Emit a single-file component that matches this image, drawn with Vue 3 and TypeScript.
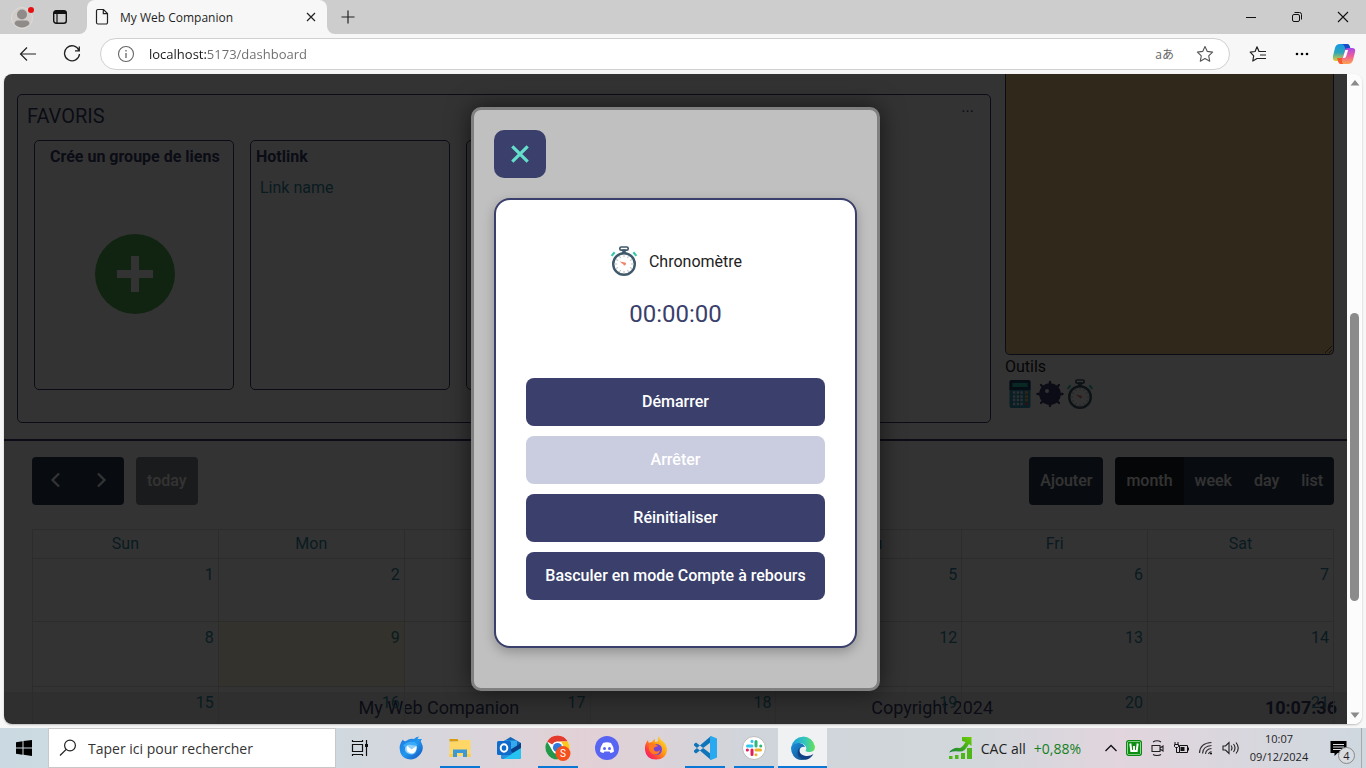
<script setup lang="ts">
import { ref, computed, onUnmounted } from 'vue'

interface CalendarDay {
  day: number
  today: boolean
}

const address = ref('localhost:5173/dashboard')
const search = ref('')
const note = ref('')
const modalOpen = ref(true)
const running = ref(false)
const countdown = ref(false)
const seconds = ref(0)
const view = ref('month')
let timer: number | undefined

const weekdays: string[] = ['Sun', 'Mon', 'Tue', 'Wed', 'Thu', 'Fri', 'Sat']
const views: string[] = ['month', 'week', 'day', 'list']
const weeks: CalendarDay[][] = [0, 1, 2].map((w) =>
  weekdays.map((_, d) => ({ day: w * 7 + d + 1, today: w * 7 + d + 1 === 9 })),
)
const ticks: number[] = Array.from({ length: 12 }, (_, i) => i * 30)

const display = computed(() => {
  const pad = (n: number): string => String(n).padStart(2, '0')
  const s = seconds.value
  return `${pad(Math.floor(s / 3600))}:${pad(Math.floor(s / 60) % 60)}:${pad(s % 60)}`
})

function start(): void {
  if (running.value) return
  running.value = true
  timer = window.setInterval(() => {
    seconds.value = Math.max(0, seconds.value + (countdown.value ? -1 : 1))
  }, 1000)
}
function stop(): void {
  running.value = false
  window.clearInterval(timer)
}
function reset(): void {
  stop()
  seconds.value = 0
}
onUnmounted(stop)
</script>

<template>
  <div class="desktop">
    <svg class="defs" aria-hidden="true">
      <defs>
        <symbol id="stopwatch" viewBox="0 0 30 30">
          <path d="M3.500 10.500 6.500 7l-1.700-1.400-3 3.600zM26.500 10.500 23.500 7l1.700-1.400 3 3.600z" fill="#35c9ae" />
          <rect x="10.800" y="1" width="8.400" height="3.200" rx="1.500" fill="none" stroke="#40596b" stroke-width="1.700" />
          <path d="M13.200 3.500h3.600v4h-3.600z" fill="#40596b" />
          <circle cx="15" cy="18" r="10.800" fill="#fff" stroke="#40596b" stroke-width="2.400" />
          <path v-for="t in ticks" :key="t" d="M15 9v2.200" stroke="#b9c1c6" stroke-width="1" :transform="`rotate(${t} 15 18)`" />
          <path d="m10.500 15.400 5.700 1.200a1.400 1.400 0 1 1-1.800 2z" fill="#f0836c" />
        </symbol>
        <linearGradient id="edgeA" x1="0" y1="0" x2="1" y2="0"><stop offset="0" stop-color="#1b9de2" /><stop offset=".6" stop-color="#35c9b8" /><stop offset="1" stop-color="#6be052" /></linearGradient>
        <linearGradient id="edgeB" x1="0" y1="0" x2="1" y2="1"><stop offset="0" stop-color="#1b91dc" /><stop offset="1" stop-color="#114a8b" /></linearGradient>
        <linearGradient id="foxA" x1="1" y1="0" x2="0" y2="1"><stop offset="0" stop-color="#fff14a" /><stop offset=".45" stop-color="#ff980e" /><stop offset=".75" stop-color="#ff3647" /><stop offset="1" stop-color="#e31587" /></linearGradient>
        <linearGradient id="copA" x1="0" y1="0" x2="0" y2="1"><stop offset="0" stop-color="#1599e8" /><stop offset=".5" stop-color="#2ca6b8" /><stop offset="1" stop-color="#e5cd31" /></linearGradient>
        <linearGradient id="copB" x1="0" y1="0" x2="0" y2="1"><stop offset="0" stop-color="#a948e8" /><stop offset=".5" stop-color="#ed5c9a" /><stop offset="1" stop-color="#ffa34d" /></linearGradient>
        <linearGradient id="birdA" x1="0" y1="0" x2="1" y2="1"><stop offset="0" stop-color="#1b75dd" /><stop offset=".5" stop-color="#2296ee" /><stop offset="1" stop-color="#1451bc" /></linearGradient>
        <linearGradient id="stockA" x1="0" y1="1" x2="1" y2="0"><stop offset="0" stop-color="#16803c" /><stop offset="1" stop-color="#6ccf00" /></linearGradient>
      </defs>
    </svg>

    <header class="tabstrip">
      <div class="tab-left">
        <button class="bare avatar" aria-label="Profil">
          <svg width="24" height="24" viewBox="0 0 24 24"><circle cx="11" cy="13" r="10.500" fill="#d0cdca" stroke="#dedbd6" /><circle cx="11" cy="9.500" r="5" fill="#8f8b88" /><path d="M3.500 19q.5-3.500 3-3.500h9q2.500 0 3 3.500a10 10 0 0 1-15 0z" fill="#8f8b88" /><circle cx="20" cy="5" r="3" fill="#e60f12" /></svg>
        </button>
        <button class="bare" aria-label="Espaces de travail">
          <svg width="16" height="16" viewBox="0 0 16 16"><rect x="1.700" y="1.700" width="12.600" height="12.600" rx="2.500" fill="none" stroke="#111" stroke-width="1.400" /><path d="M1.500 5V4a2.500 2.500 0 0 1 2.500-2.500h8A2.500 2.500 0 0 1 14.500 4v1z" fill="#111" /><path d="M5 5v9" stroke="#111" stroke-width="1.200" /></svg>
        </button>
      </div>
      <div class="tab-gap">
        <div class="tab">
          <svg width="14" height="18" viewBox="0 0 14 18"><path d="M3 1.500h5.500l4 4V14.500a1.500 1.500 0 0 1-1.500 1.500H3a1.500 1.500 0 0 1-1.500-1.500V3A1.500 1.500 0 0 1 3 1.500zM8.300 1.500V5.700h4.200" fill="none" stroke="#222" stroke-width="1.200" /></svg>
          <span class="tab-title">My Web Companion</span>
          <button class="bare" aria-label="Fermer l'onglet"><svg width="10" height="10" viewBox="0 0 10 10"><path d="m1 1 8 8M9 1 1 9" stroke="#222" stroke-width="1.200" /></svg></button>
        </div>
      </div>
      <div class="tab-right">
        <button class="bare" aria-label="Nouvel onglet"><svg width="14" height="14" viewBox="0 0 14 14"><path d="M7 .5v13M.5 7h13" stroke="#222" stroke-width="1.200" /></svg></button>
        <div class="window-buttons">
          <button class="bare" aria-label="Réduire"><svg width="12" height="12" viewBox="0 0 12 12"><path d="M1 6.500h10" stroke="#111" /></svg></button>
          <button class="bare" aria-label="Restaurer"><svg width="12" height="12" viewBox="0 0 12 12"><rect x="1.500" y="3.500" width="7" height="7" rx="1.500" fill="none" stroke="#111" /><path d="M3.500 1.500H8.500A2 2 0 0 1 10.500 3.500V8.500" fill="none" stroke="#111" /></svg></button>
          <button class="bare" aria-label="Fermer"><svg width="12" height="12" viewBox="0 0 12 12"><path d="m1 1 10 10M11 1 1 11" stroke="#111" stroke-width="1.100" /></svg></button>
        </div>
      </div>
    </header>

    <nav class="toolbar">
      <button class="bare tool" aria-label="Précédent"><svg width="18" height="16" viewBox="0 0 18 16"><path d="M17 8H1.500M8 1.500 1.500 8 8 14.500" fill="none" stroke="#222" stroke-width="1.200" /></svg></button>
      <button class="bare tool" aria-label="Actualiser"><svg width="18" height="18" viewBox="0 0 18 18"><path d="M16 5.500A7.500 7.500 0 1 0 16.500 9M16.300 1.500v4.300H12" fill="none" stroke="#222" stroke-width="1.300" /></svg></button>
      <div class="address">
        <svg width="18" height="18" viewBox="0 0 18 18"><circle cx="9" cy="9" r="7.500" fill="none" stroke="#666" stroke-width="1.100" /><path d="M9 8v5M9 5v1.500" stroke="#666" stroke-width="1.300" /></svg>
        <input v-model="address" class="address-input" type="text" aria-label="Adresse" />
        <button class="bare translate" aria-label="Traduire">aあ</button>
        <button class="bare" aria-label="Ajouter aux favoris"><svg width="18" height="18" viewBox="0 0 18 18"><path d="m9 1.500 2.300 4.900 5.300.7-3.900 3.700 1 5.400L9 13.600l-4.700 2.600 1-5.400L1.400 7.100l5.300-.7z" fill="none" stroke="#555" stroke-width="1.100" stroke-linejoin="round" /></svg></button>
      </div>
      <div class="toolbar-end">
        <button class="bare" aria-label="Favoris"><svg width="18" height="18" viewBox="0 0 18 18"><path d="M10 13.500 8 13.500l-4.200 2.500.9-5.200L1.200 7.200l4.900-.7L8 1.800l2 4.700h7M11 10h6M10 13.500h7" fill="none" stroke="#222" stroke-width="1.200" stroke-linejoin="round" /></svg></button>
        <button class="bare dots" aria-label="Paramètres"><svg width="16" height="4" viewBox="0 0 16 4"><circle cx="3" cy="2" r="1.300" /><circle cx="8" cy="2" r="1.300" /><circle cx="13" cy="2" r="1.300" /></svg></button>
        <button class="bare" aria-label="Copilot"><svg width="24" height="22" viewBox="0 0 24 22"><path d="M8 1h7q2 0 2.600 2L19 7h-3.500q-2 0-2.600 2l-2 6.500Q10.200 18 8 18H4q-4 0-3-5L3 5q1-4 5-4z" fill="url(#copA)" /><path d="M11 1h4q2 0 2.600 2L19 7h-4q-2-1-2.500-3.500T9 1z" fill="#1c49c6" /><path d="M16 21H9q-2 0-2.600-2L5 15h3.500q2 0 2.600-2l2-6.500Q13.800 5 16 5h4q4 0 3 4l-2 8q-1 4-5 4z" fill="url(#copB)" /><path d="m13.300 7-2.500 8h1.600q1.300 0 1.900-2l1.800-6z" fill="#fff" /><path d="M5 15h5q-.5 4 1 6H9q-2 0-2.600-2z" fill="#f35a2e" /></svg></button>
      </div>
    </nav>

    <div class="viewport">
      <main class="page">
        <div class="top">
          <section class="favorites">
            <div class="fav-head">
              <h2>FAVORIS</h2>
              <button class="bare more" aria-label="Options">...</button>
            </div>
            <div class="cards">
              <article class="card create">
                <h3>Crée un groupe de liens</h3>
                <button class="bare plus" aria-label="Ajouter un groupe"><svg width="80" height="80" viewBox="0 0 80 80"><circle cx="40" cy="40" r="40" fill="#55b155" /><path d="M22 40h36M40 22v36" stroke="#fff" stroke-width="8" /></svg></button>
              </article>
              <article class="card">
                <h3>Hotlink</h3>
                <a href="#">Link name</a>
              </article>
              <article class="card"></article>
            </div>
          </section>
          <aside class="tools">
            <textarea v-model="note" aria-label="Notes"></textarea>
            <h4>Outils</h4>
            <div class="tool-icons">
              <button class="bare" aria-label="Calculatrice"><svg width="30" height="30" viewBox="0 0 30 30"><rect x="4.500" y="1" width="21" height="28" rx="2" fill="#2e96b8" /><path d="M4.500 11V3a2 2 0 0 1 2-2h17a2 2 0 0 1 2 2v8z" fill="#27446b" /><rect x="7.500" y="4" width="15" height="4" fill="#35c9ae" /><path d="M8 13.500h10M8 17.500h10M8 21h10M8 25h10" stroke="#e8edf0" stroke-width="2.300" stroke-dasharray="2.300 1.400" /><path d="M20 13.500h3M20 17.500h3M20 21h3" stroke="#f5b65e" stroke-width="2.300" /><path d="M20 25h3" stroke="#e45450" stroke-width="2.300" /></svg></button>
              <button class="bare" aria-label="Démineur"><svg width="30" height="30" viewBox="0 0 30 30"><path d="M15 3v24M2.500 15h25M6 6l18 18M24 6 6 24" stroke="#3a3f6b" stroke-width="2.400" stroke-linecap="round" /><circle cx="15" cy="15" r="10.800" fill="#3a3f6b" /><circle cx="12" cy="12" r="2" fill="#f4f4ff" /></svg></button>
              <button class="bare" aria-label="Chronomètre" @click="modalOpen = true"><svg width="30" height="30"><use href="#stopwatch" /></svg></button>
            </div>
          </aside>
        </div>

        <section class="calendar">
          <div class="cal-bar">
            <div class="cal-group">
              <div class="segment">
                <button aria-label="Mois précédent"><svg width="24" height="24" viewBox="0 0 24 24"><path d="m16 5.500-6.500 6.500L16 18.500" fill="none" stroke="#fff" stroke-width="2.200" /></svg></button>
                <button aria-label="Mois suivant"><svg width="24" height="24" viewBox="0 0 24 24"><path d="m9 5.500 6.500 6.500L9 18.500" fill="none" stroke="#fff" stroke-width="2.200" /></svg></button>
              </div>
              <div class="segment"><button disabled>today</button></div>
            </div>
            <div class="cal-group">
              <div class="segment"><button>Ajouter</button></div>
              <div class="segment">
                <button v-for="v in views" :key="v" :class="{ active: v === view }" @click="view = v">{{ v }}</button>
              </div>
            </div>
          </div>
          <table class="grid">
            <thead>
              <tr><th v-for="d in weekdays" :key="d" scope="col">{{ d }}</th></tr>
            </thead>
            <tbody>
              <tr v-for="(week, i) in weeks" :key="i">
                <td v-for="cell in week" :key="cell.day" :class="{ today: cell.today }">{{ cell.day }}</td>
              </tr>
            </tbody>
          </table>
        </section>

        <footer class="foot">
          <span class="foot-name">My Web Companion</span>
          <span>Copyright 2024</span>
          <strong>10:07:36</strong>
        </footer>

        <div v-if="modalOpen" class="overlay">
          <div class="modal" role="dialog" aria-label="Chronomètre">
            <button class="close" aria-label="Fermer" @click="modalOpen = false"><svg width="20" height="20" viewBox="0 0 20 20"><path d="m2.300 2.300 15.400 15.400M17.700 2.300 2.300 17.700" stroke="#64dfcb" stroke-width="3.200" /></svg></button>
            <div class="panel">
              <div class="panel-title">
                <svg width="30" height="30"><use href="#stopwatch" /></svg>
                <span>Chronomètre</span>
              </div>
              <div class="time">{{ display }}</div>
              <div class="actions">
                <button :disabled="running" @click="start">Démarrer</button>
                <button :disabled="!running" @click="stop">Arrêter</button>
                <button @click="reset">Réinitialiser</button>
                <button @click="countdown = !countdown">Basculer en mode {{ countdown ? 'Chronomètre' : 'Compte à rebours' }}</button>
              </div>
            </div>
          </div>
        </div>
      </main>
      <div class="scrollbar" aria-hidden="true">
        <svg width="10" height="6" viewBox="0 0 10 6"><path d="M5 0 9.500 5.500H.5z" fill="#8a8a8a" /></svg>
        <div class="track-before"></div>
        <div class="thumb"></div>
        <div class="track-after"></div>
        <svg width="10" height="6" viewBox="0 0 10 6"><path d="M5 6 9.500.5H.5z" fill="#8a8a8a" /></svg>
      </div>
    </div>

    <div class="taskbar">
      <button class="bare start" aria-label="Démarrer Windows"><svg width="16" height="16" viewBox="0 0 16 16"><path d="M0 2.200 6.500 1.300V7.500H0zM7.500 1.100 16 0v7.500H7.500zM0 8.500h6.500v6.200L0 13.800zM7.500 8.500H16V16l-8.500-1.200z" /></svg></button>
      <div class="search">
        <svg width="18" height="18" viewBox="0 0 18 18"><circle cx="11" cy="6.500" r="5.400" fill="none" stroke="#222" stroke-width="1.200" /><path d="m7.200 10.400-6.200 6.100" stroke="#222" stroke-width="1.300" /></svg>
        <input v-model="search" type="text" aria-label="Rechercher" placeholder="Taper ici pour rechercher" />
      </div>
      <button class="bare taskview" aria-label="Affichage des tâches"><svg width="18" height="16" viewBox="0 0 18 16"><path d="M1.500 4.500h10v7h-10zM1.500 0v1.500h10V0M1.500 16v-1.500h10V16M15.500 0v16" fill="none" stroke="#111" stroke-width="1.200" /><path d="M14 4h3v3h-3z" fill="#111" /></svg></button>
      <div class="apps">
        <button class="bare app" aria-label="Thunderbird"><svg width="24" height="24" viewBox="0 0 24 24"><path d="M4 3.500Q4.500 6 7 5 11 2 15 3q2-2.500 5-2.500L18.500 3 23 3q-2 2-.5 4 3 6-1 11T12 23.500Q4 23 1.500 17-1 9 4 3.500z" fill="url(#birdA)" /><path d="M7 8.500q-2.500 6 1 8.500 4 2.500 7.500.5 3-3 2-8L12 8z" fill="#8fd0fb" /><path d="m8 9.500 4.500 4L17.500 10q.5 5-3 7-3.500 1-6-1.500-1.500-2.500-.5-6z" fill="#fff" /><path d="M4 9.500Q8.500 4.500 15.500 6l3.500 3-4 .5-5.500-1L6 11z" fill="#38aafa" /></svg></button>
        <button class="bare app open" aria-label="Explorateur"><svg width="24" height="24" viewBox="0 0 24 24"><path d="M1.500 3h8l1.500 2.500H1.500z" fill="#d99c0b" /><path d="M1.500 6 10 5.500 11 4h11.500v16h-21z" fill="#ffd766" /><path d="M5 21v-7.500h14V21h-4v-4H9v4z" fill="#3a97d8" /><path d="M1.500 18H5v3H1.500zM19 18h3.500v3H19z" fill="#ffcb45" /></svg></button>
        <button class="bare app" aria-label="Outlook"><svg width="26" height="24" viewBox="0 0 26 24"><path d="m5 7 9.500-6L25 7v14q0 2-2 2H7q-2 0-2-2z" fill="#1267b8" /><path d="M8 4.500h13V15H8z" fill="#34a9ee" /><path d="m14 14 11-7v6l-7 5z" fill="#0a3f86" /><path d="m25 12-9 5.500-9 5.500h16q2 0 2-2z" fill="#25c2f2" /><path d="m5 13 11 5-9 5q-2 0-2-2z" fill="#2493df" /><rect x="1" y="5" width="14" height="14" rx="1.500" fill="#0f6ccb" /><ellipse cx="8" cy="12" rx="3.300" ry="3.700" fill="none" stroke="#fff" stroke-width="2" /></svg></button>
        <button class="bare app open" aria-label="Chrome"><svg width="26" height="26" viewBox="0 0 26 26"><circle cx="12.500" cy="12.500" r="12" fill="#fff" /><path d="M2.100 6.500a12 12 0 0 1 20.800 0H12.500a6 6 0 0 0-5.200 3z" fill="#e33b2e" /><path d="M22.900 6.500a12 12 0 0 1-10.400 18l5.200-9a6 6 0 0 0 0-6l-1.700-3z" fill="#fcc71f" /><path d="M2.100 6.500a12 12 0 0 0 10.400 18l3.400-6.200a6 6 0 0 1-8.600-2.800z" fill="#24984a" /><circle cx="12.500" cy="12.500" r="5.800" fill="#fff" /><circle cx="12.500" cy="12.500" r="4.600" fill="#3279dd" /><circle cx="18" cy="18.500" r="7.500" fill="#f4511e" /><text x="18" y="22" text-anchor="middle" fill="#fff" font-family="Roboto, sans-serif" font-size="10">S</text></svg></button>
        <button class="bare app" aria-label="Discord"><svg width="24" height="24" viewBox="0 0 24 24"><circle cx="12" cy="12" r="12" fill="#5865f2" /><path d="M8 7q4-1.500 8 0 3 4 3 8.500-1.500 1.200-3.500 1.500l-1-1.500h-5L8.500 17Q6.500 16.700 5 15.500 5 11 8 7z" fill="#fff" /><circle cx="9.500" cy="12.500" r="1.500" fill="#5865f2" /><circle cx="14.500" cy="12.500" r="1.500" fill="#5865f2" /></svg></button>
        <button class="bare app" aria-label="Firefox"><svg width="24" height="24" viewBox="0 0 24 24"><path d="M14.500 0q1 3 4 5 5 4 4.500 9.500-1 9-11 9T1 14Q.5 8 4 4q0 2 1 3 1.500-1 3-1Q9.500 3.500 11 3v3q3 0 3-2 0-2 .5-4z" fill="url(#foxA)" /><circle cx="12.500" cy="13.500" r="5.500" fill="#7545d5" /><path d="M5 9q3-3 6-1l3 2q-2 1-3 1-2 1-1 3 2 3 6 0-1 5-6 4.500Q4 17 5 9z" fill="#ff7a20" /></svg></button>
        <button class="bare app open" aria-label="Visual Studio Code"><svg width="24" height="24" viewBox="0 0 24 24"><path d="m1 8 2-1.500L18 18v6L1 9.500zM1 16l2 1.500L18 6V0L1 14.500z" fill="#0f75bb" /><path d="m18 0 6 2.500v19L18 24l-1-1.500v-21z" fill="#29a9f0" /></svg></button>
        <button class="bare app open" aria-label="Slack"><svg width="24" height="24" viewBox="0 0 24 24"><circle cx="12" cy="12" r="11.500" fill="#fff" stroke="#bbb" /><g fill="none" stroke-width="3" stroke-linecap="round"><path d="M10 5.300v.1M10 10H5.500" stroke="#36c5f0" /><path d="M14 5.500V10M18.700 10h.1" stroke="#2eb67d" /><path d="M14 14h4.500M14 18.700v.1" stroke="#ecb22e" /><path d="M10 14v4.500M5.300 14h.1" stroke="#e01e5a" /></g></svg></button>
        <button class="bare app current" aria-label="Edge"><svg width="24" height="24" viewBox="0 0 24 24"><path d="M.3 11A12 12 0 0 1 24 10.500q0 5-5 5.500-3 .3-4.500-1 1.500-1.500.5-4Q13 7 8 7 2 7.500.3 11z" fill="url(#edgeA)" /><path d="M.2 11Q2 6.500 8.500 7q4 .5 5.500 4-4-1-5.500 3-1 7 7 9-8 3-13-3Q-.5 16 .2 11z" fill="url(#edgeB)" /><path d="M8.500 12q-1 6 4.500 7.500 5 1.500 9.500-1.500-3 5-8 5.800Q6 22 6.500 16q.3-2.500 2-4z" fill="#113f83" /></svg></button>
      </div>
      <div class="tray">
        <svg width="24" height="24" viewBox="0 0 24 24"><path d="M0 23v-3h3.500v3zM6 23v-4h3.500v4zM12 23v-6h4v6zM18 23V12h5v11z" fill="#4fb61a" /><path d="M0 16.500Q4.500 11 10 12q3 .3 6.500-6L13 5V1h9.500v9L20 8q-4.500 8.500-10 7.500-5-1-10 1z" fill="url(#stockA)" /></svg>
        <span class="stock">CAC all</span>
        <span class="stock gain">+0,88%</span>
        <button class="bare chevron" aria-label="Icônes cachées"><svg width="14" height="8" viewBox="0 0 14 8"><path d="m1.500 7 5.500-5.500L12.500 7" fill="none" stroke="#111" stroke-width="1.300" /></svg></button>
        <button class="bare" aria-label="Application W"><svg width="16" height="16" viewBox="0 0 16 16"><rect x=".7" y=".7" width="14.600" height="14.600" rx="2" fill="#fff" stroke="#078b0c" stroke-width="1.400" /><path d="M2 2h12v12H2z" fill="#0c8f12" /><path d="M4.300 3.500l1 7.500h5.400l1-7.500M8 6v5" fill="none" stroke="#fff" stroke-width="2" /></svg></button>
        <button class="bare" aria-label="Caméra"><svg width="16" height="16" viewBox="0 0 16 16"><path d="M2 5.500h8v6H2zM10 8l3-2v5l-3-2M3 2q4-2.500 8 0M3 14.500q4 2 8 0" fill="none" stroke="#222" stroke-width="1.100" /></svg></button>
        <button class="bare" aria-label="Batterie"><svg width="16" height="16" viewBox="0 0 16 16"><path d="M5.500 5.500h8v7h-8zM14.500 7.500v3M1 2v2M4 2v2M.5 4.500h4v2l-1 1h-2l-1-1zM2.500 8v4.500h3" fill="none" stroke="#111" /><path d="M6.500 7h4v4h-4z" fill="#111" /></svg></button>
        <button class="bare" aria-label="Réseau"><svg width="16" height="16" viewBox="0 0 16 16"><path d="M1.500 13Q2 3 13.500 2.500M4.500 13.500Q5 6 13.500 5.500M7.500 14Q8 9 13.500 8.500M10.500 14q.5-2 3-2.500" fill="none" stroke="#333" stroke-width="1.200" /><circle cx="13" cy="13.500" r="1" /></svg></button>
        <button class="bare" aria-label="Volume"><svg width="18" height="16" viewBox="0 0 18 16"><path d="M1 6h2.500L7 2.500v11L3.500 10H1zM9 5.500q2 2.500 0 5M11.500 4q3 4 0 8M14 2.500q4.500 5.500 0 11" fill="none" stroke="#222" stroke-width="1.100" /></svg></button>
        <div class="clock"><span>10:07</span><span>09/12/2024</span></div>
        <button class="bare notif" aria-label="Notifications">
          <svg width="17" height="17" viewBox="0 0 17 17"><path d="M.5 1h16v12h-9L4.500 16v-3h-4z" /><path d="M3 4.500h11M3 7h11M3 9.500h8" stroke="#dfe0e3" /></svg>
          <span class="badge">4</span>
        </button>
        <div class="peek"></div>
      </div>
    </div>
  </div>
</template>

<style>
body {
  margin: 0;
}
</style>

<style scoped>
.desktop {
  --navy: #3a3f6b;
  --link: #30899f;
  display: flex;
  flex-direction: column;
  height: 100vh;
  overflow: hidden;
  background: #f7f7f7;
  color: #1f1f1f;
  font-family: "Open Sans", "Noto Sans", "Noto Sans CJK JP", sans-serif;
  font-size: 12px;
}
.desktop * {
  box-sizing: border-box;
}
.defs {
  position: absolute;
  width: 0;
  height: 0;
}
svg {
  display: block;
  flex: none;
}
button,
input,
textarea {
  font: inherit;
  color: inherit;
}
.bare {
  display: flex;
  align-items: center;
  justify-content: center;
  padding: 0;
  border: 0;
  background: none;
}

/* Tab strip */
.tabstrip {
  display: flex;
  flex: none;
  height: 34px;
}
.tab-left,
.tab-right {
  display: flex;
  align-items: center;
  background: #cdcdcd;
}
.tab-left {
  width: 87px;
  padding-left: 11px;
  gap: 17px;
  border-bottom-right-radius: 8px;
}
.tab-gap {
  background: linear-gradient(#cdcdcd 50%, #f7f7f7 50%);
}
.tab {
  display: flex;
  align-items: center;
  width: 240px;
  height: 34px;
  padding: 0 11px 0 8px;
  border-radius: 8px 8px 0 0;
  background: #f7f7f7;
}
.tab-title {
  flex: 1;
  padding-left: 11px;
}
.tab-right {
  flex: 1;
  justify-content: space-between;
  padding-left: 14px;
  border-bottom-left-radius: 8px;
}
.window-buttons {
  display: flex;
}
.window-buttons .bare {
  width: 46px;
  height: 34px;
}

/* Address bar */
.toolbar {
  display: flex;
  flex: none;
  align-items: center;
  height: 40px;
  padding-left: 6px;
}
.tool {
  width: 44px;
  height: 32px;
}
.address {
  display: flex;
  flex: 1;
  align-items: center;
  height: 32px;
  margin-left: 6px;
  padding: 0 15px 0 16px;
  border: 1px solid #d0d0d0;
  border-radius: 16px;
  background: #fff;
}
.address-input {
  flex: 1;
  min-width: 0;
  margin: 0 14px;
  padding: 0;
  border: 0;
  outline: 0;
  background: linear-gradient(90deg, #1a1a1a 58px, #6c6c6c 58px);
  background-clip: text;
  -webkit-text-fill-color: transparent;
  font-size: 13px;
}
.translate {
  margin-right: 22px;
  color: #666;
  font-size: 12px;
}
.toolbar-end {
  display: flex;
  align-items: center;
  justify-content: space-between;
  width: 136px;
  padding: 0 10px 0 19px;
}
.dots {
  padding-left: 4px;
}

/* Browser viewport */
.viewport {
  display: flex;
  flex: 1;
  min-height: 0;
  margin: 0 4px 4px;
  border-radius: 8px;
  overflow: hidden;
  box-shadow: 0 1px 2px #bbb;
}
.page {
  position: relative;
  flex: 1;
  overflow: hidden;
  background: #fff;
  color: var(--navy);
  font-family: Roboto, sans-serif;
  font-size: 16px;
}
.top {
  display: grid;
  grid-template-columns: 974fr 329fr;
  gap: 14px;
  padding: 0 13px 16px;
  border-bottom: 2px solid var(--navy);
}
.favorites {
  margin-top: 20px;
  padding: 8px 9px 32px;
  border: 1px solid var(--navy);
  border-radius: 5px;
}
.fav-head {
  display: flex;
  justify-content: space-between;
  height: 37px;
}
h2 {
  margin: 0;
  font-size: 20px;
  font-weight: 400;
  line-height: 26px;
}
.more {
  align-self: flex-start;
  margin-right: 7px;
  line-height: 8px;
}
.cards {
  display: flex;
  gap: 16px;
  padding-left: 7px;
}
.card {
  display: flex;
  flex-direction: column;
  width: 200px;
  height: 250px;
  padding: 4px 5px;
  border: 1px solid var(--navy);
  border-radius: 5px;
}
h3 {
  margin: 0;
  font-size: 16px;
  font-weight: 700;
  line-height: 24px;
}
.create h3 {
  padding-left: 10px;
  white-space: nowrap;
}
.plus {
  margin: auto;
  padding-bottom: 6px;
  padding-left: 2px;
}
.card a {
  margin-top: 6px;
  padding-left: 4px;
  color: var(--link);
  line-height: 26px;
  text-decoration: none;
}
.tools {
  display: flex;
  flex-direction: column;
}
textarea {
  height: 281px;
  border: 1px solid var(--navy);
  border-top: 0;
  border-radius: 0 0 5px 5px;
  background: #f0c887;
}
h4 {
  margin: 0;
  color: #222;
  font-size: 16px;
  font-weight: 400;
  line-height: 24px;
}
.tool-icons {
  display: flex;
}

/* Calendar */
.calendar {
  padding: 16px 13px 0 28px;
}
.cal-bar,
.cal-group {
  display: flex;
  justify-content: space-between;
  gap: 12px;
}
.segment {
  display: flex;
  border-radius: 4px;
  overflow: hidden;
}
.segment button {
  height: 48px;
  padding: 0 11px 2px;
  border: 0;
  background: #2c3e50;
  color: #fff;
  font-weight: 500;
}
.segment button:disabled {
  background: #82868a;
}
.segment .active {
  background: #1a1f25;
}
.grid {
  position: relative;
  z-index: 2;
  width: 100%;
  margin-top: 24px;
  border-collapse: collapse;
  table-layout: fixed;
  color: var(--link);
}
th,
td {
  border: 1px solid #ddd;
}
th {
  height: 29px;
  padding: 0 0 2px;
  font-weight: 400;
}
td {
  height: 65px;
  padding: 4px 4px 0;
  line-height: 24px;
  text-align: right;
  vertical-align: top;
}
tbody tr:first-child td {
  height: 63px;
}
.today {
  background: rgba(255, 220, 40, 0.15);
}
.foot {
  position: absolute;
  z-index: 1;
  right: 0;
  bottom: 0;
  left: 0;
  display: grid;
  grid-template-columns: 513fr 394fr auto;
  align-items: center;
  height: 32px;
  padding-right: 10px;
  padding-bottom: 2px;
  padding-left: 26.400%;
  background: #ebebeb;
  font-size: 18px;
}

/* Stopwatch dialog */
.overlay {
  position: absolute;
  z-index: 3;
  inset: 0;
  display: flex;
  align-items: center;
  justify-content: center;
  background: rgba(0, 0, 0, 0.8);
}
.modal {
  padding: 20px 20px 40px;
  border: 3px solid #808080;
  border-radius: 10px;
  background: #c0c0c0;
  box-shadow: 0 0 24px rgba(0, 0, 0, 0.6);
}
.close {
  display: flex;
  align-items: center;
  justify-content: center;
  width: 52px;
  height: 48px;
  padding: 0;
  border: 0;
  border-radius: 10px;
  background: var(--navy);
}
.panel {
  display: flex;
  flex-direction: column;
  align-items: center;
  margin-top: 20px;
  padding: 46px 30px;
  border: 2px solid var(--navy);
  border-radius: 16px;
  background: #fff;
  box-shadow: 0 4px 12px rgba(0, 0, 0, 0.25);
}
.panel-title {
  display: flex;
  align-items: center;
  gap: 10px;
  height: 30px;
  color: #222;
}
.time {
  margin: 20px 0 46px;
  font-size: 24px;
  line-height: 36px;
}
.actions {
  display: flex;
  flex-direction: column;
  gap: 10px;
}
.actions button {
  height: 48px;
  padding: 0 19px 2px;
  border: 0;
  border-radius: 8px;
  background: var(--navy);
  color: #fff;
  font-weight: 500;
  white-space: nowrap;
}
.actions button:disabled {
  background: #cacce0;
}

/* Scroll bar */
.scrollbar {
  display: flex;
  flex-direction: column;
  align-items: center;
  width: 15px;
  padding: 6px 0;
  background: #fcfcfc;
}
.track-before {
  flex: 227;
}
.thumb {
  flex: 288;
  width: 9px;
  border-radius: 5px;
  background: #8b8b8b;
}
.track-after {
  flex: 111;
}

/* Windows task bar */
.taskbar {
  display: flex;
  flex: none;
  align-items: stretch;
  height: 40px;
  background: linear-gradient(90deg, #cbdae2, #d0d9df 25%, #e2d1d6 43%, #d0d5db 55%, #d2d7dc 72%, #e2d5dd 82%, #cfd8df);
}
.start {
  width: 48px;
}
.search {
  display: flex;
  align-items: center;
  width: 288px;
  padding-left: 10px;
  gap: 11px;
  border: 1px solid #c8c8c8;
  background: #fff;
}
.search input {
  flex: 1;
  min-width: 0;
  padding: 0;
  border: 0;
  outline: 0;
  background: none;
  font-size: 14px;
}
.search input::placeholder {
  color: #333;
  opacity: 1;
}
.taskview {
  width: 48px;
}
.apps {
  display: flex;
  margin-left: 2px;
}
.app {
  width: 49px;
  padding-top: 2px;
  border-bottom: 2px solid transparent;
}
.open {
  background: linear-gradient(#0a78d4, #0a78d4) bottom / 40px 2px no-repeat border-box;
}
.current {
  border-bottom-color: #0a78d4;
  background: #f0f1f3;
}
.tray {
  display: flex;
  align-items: center;
  margin-left: auto;
  gap: 8px;
}
.stock {
  font-size: 14px;
}
.gain {
  color: #14801f;
}
.chevron {
  width: 29px;
  padding-left: 15px;
}
.clock {
  display: flex;
  flex-direction: column;
  align-items: center;
  width: 62px;
  font-size: 11px;
  line-height: 18px;
}
.notif {
  position: relative;
  width: 30px;
  height: 40px;
  margin-left: 5px;
}
.badge {
  position: absolute;
  right: -2px;
  bottom: 4px;
  width: 17px;
  height: 17px;
  border: 1px solid #888;
  border-radius: 50%;
  background: #d8dce1;
  font-size: 11px;
  line-height: 15px;
}
.peek {
  width: 5px;
  height: 40px;
  border-left: 1px solid #a5abb0;
}
</style>
